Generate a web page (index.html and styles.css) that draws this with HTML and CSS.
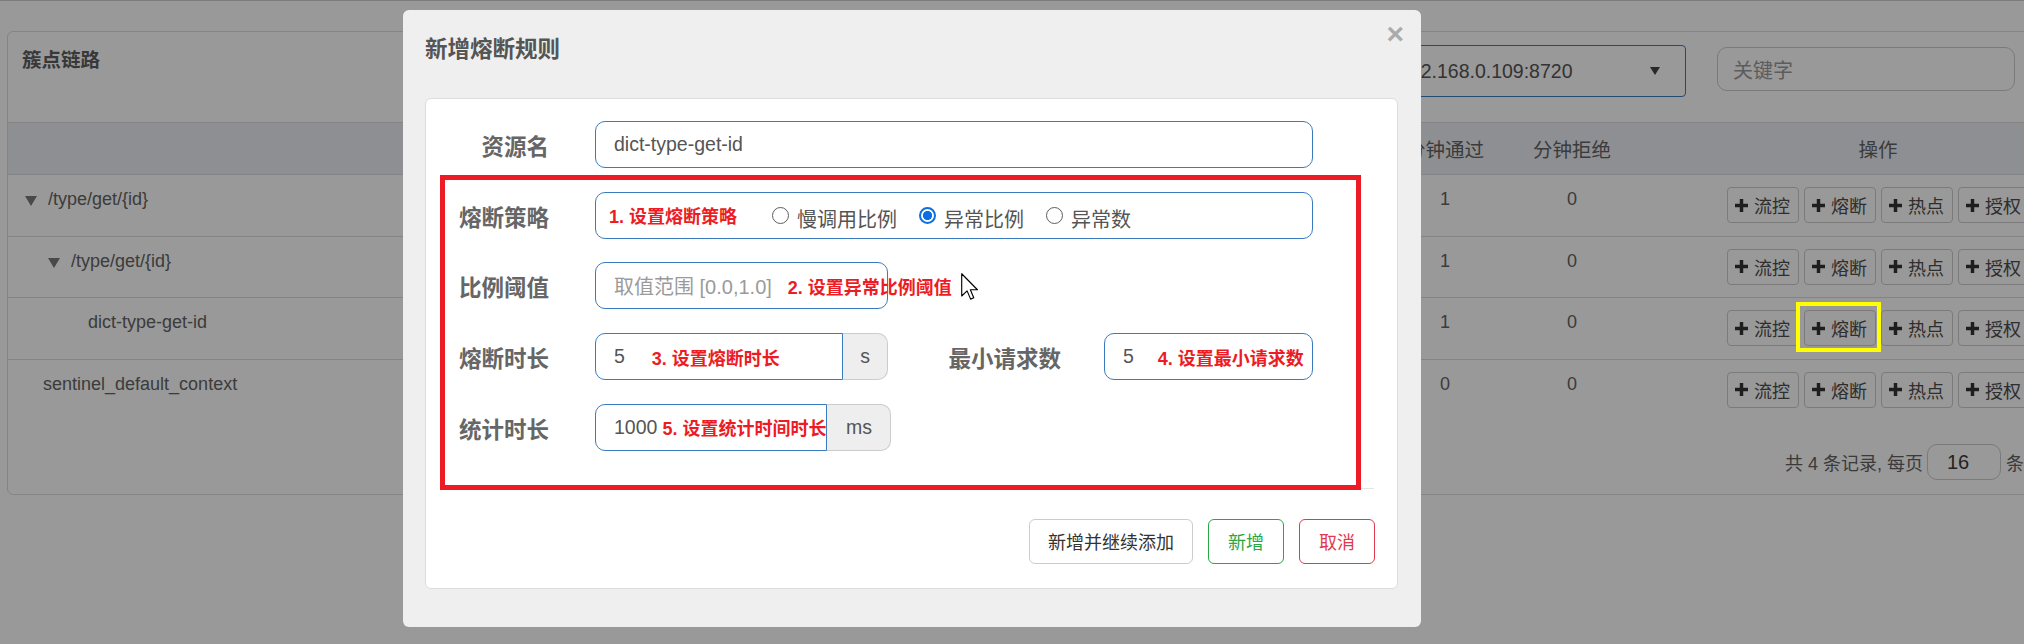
FILE: index.html
```html
<!DOCTYPE html>
<html lang="zh-CN">
<head>
<meta charset="utf-8">
<title>簇点链路</title>
<link rel="stylesheet" href="styles.css">
</head>
<body>
<div class="navline"></div>

<div class="card">
  <div class="card-head">
    <h3 class="card-title">簇点链路</h3>
    <div class="tools">
      <div class="select">192.168.0.109:8720<span class="caret"></span></div>
      <div class="search">关键字</div>
    </div>
  </div>

  <table class="table">
    <colgroup>
      <col class="w-name"><col class="w-num"><col class="w-num2"><col class="w-op">
    </colgroup>
    <thead>
      <tr><th class="th-name">资源名</th><th>分钟通过</th><th>分钟拒绝</th><th>操作</th></tr>
    </thead>
    <tbody>
      <tr>
        <td class="name lv0"><span class="tri"></span>/type/get/{id}</td>
        <td class="num">1</td><td class="num">0</td>
        <td class="ops"><div class="opbtns">
          <button class="obtn"><svg class="plus" viewBox="0 0 12 12"><path d="M4.4 0h3.2v4.4H12v3.2H7.6V12H4.4V7.6H0V4.4h4.4z"/></svg>流控</button>
          <button class="obtn"><svg class="plus" viewBox="0 0 12 12"><path d="M4.4 0h3.2v4.4H12v3.2H7.6V12H4.4V7.6H0V4.4h4.4z"/></svg>熔断</button>
          <button class="obtn"><svg class="plus" viewBox="0 0 12 12"><path d="M4.4 0h3.2v4.4H12v3.2H7.6V12H4.4V7.6H0V4.4h4.4z"/></svg>热点</button>
          <button class="obtn"><svg class="plus" viewBox="0 0 12 12"><path d="M4.4 0h3.2v4.4H12v3.2H7.6V12H4.4V7.6H0V4.4h4.4z"/></svg>授权</button>
        </div></td>
      </tr>
      <tr>
        <td class="name lv1"><span class="tri"></span>/type/get/{id}</td>
        <td class="num">1</td><td class="num">0</td>
        <td class="ops"><div class="opbtns">
          <button class="obtn"><svg class="plus" viewBox="0 0 12 12"><path d="M4.4 0h3.2v4.4H12v3.2H7.6V12H4.4V7.6H0V4.4h4.4z"/></svg>流控</button>
          <button class="obtn"><svg class="plus" viewBox="0 0 12 12"><path d="M4.4 0h3.2v4.4H12v3.2H7.6V12H4.4V7.6H0V4.4h4.4z"/></svg>熔断</button>
          <button class="obtn"><svg class="plus" viewBox="0 0 12 12"><path d="M4.4 0h3.2v4.4H12v3.2H7.6V12H4.4V7.6H0V4.4h4.4z"/></svg>热点</button>
          <button class="obtn"><svg class="plus" viewBox="0 0 12 12"><path d="M4.4 0h3.2v4.4H12v3.2H7.6V12H4.4V7.6H0V4.4h4.4z"/></svg>授权</button>
        </div></td>
      </tr>
      <tr>
        <td class="name leaf2">dict-type-get-id</td>
        <td class="num">1</td><td class="num">0</td>
        <td class="ops"><div class="opbtns">
          <button class="obtn"><svg class="plus" viewBox="0 0 12 12"><path d="M4.4 0h3.2v4.4H12v3.2H7.6V12H4.4V7.6H0V4.4h4.4z"/></svg>流控</button>
          <button class="obtn marked"><svg class="plus" viewBox="0 0 12 12"><path d="M4.4 0h3.2v4.4H12v3.2H7.6V12H4.4V7.6H0V4.4h4.4z"/></svg>熔断<span class="hl"></span></button>
          <button class="obtn"><svg class="plus" viewBox="0 0 12 12"><path d="M4.4 0h3.2v4.4H12v3.2H7.6V12H4.4V7.6H0V4.4h4.4z"/></svg>热点</button>
          <button class="obtn"><svg class="plus" viewBox="0 0 12 12"><path d="M4.4 0h3.2v4.4H12v3.2H7.6V12H4.4V7.6H0V4.4h4.4z"/></svg>授权</button>
        </div></td>
      </tr>
      <tr>
        <td class="name leaf0">sentinel_default_context</td>
        <td class="num">0</td><td class="num">0</td>
        <td class="ops"><div class="opbtns">
          <button class="obtn"><svg class="plus" viewBox="0 0 12 12"><path d="M4.4 0h3.2v4.4H12v3.2H7.6V12H4.4V7.6H0V4.4h4.4z"/></svg>流控</button>
          <button class="obtn"><svg class="plus" viewBox="0 0 12 12"><path d="M4.4 0h3.2v4.4H12v3.2H7.6V12H4.4V7.6H0V4.4h4.4z"/></svg>熔断</button>
          <button class="obtn"><svg class="plus" viewBox="0 0 12 12"><path d="M4.4 0h3.2v4.4H12v3.2H7.6V12H4.4V7.6H0V4.4h4.4z"/></svg>热点</button>
          <button class="obtn"><svg class="plus" viewBox="0 0 12 12"><path d="M4.4 0h3.2v4.4H12v3.2H7.6V12H4.4V7.6H0V4.4h4.4z"/></svg>授权</button>
        </div></td>
      </tr>
    </tbody>
  </table>

  <div class="pager">
    <span>共 4 条记录, 每页</span>
    <span class="pagesize">16</span>
    <span>条记录</span>
  </div>
</div>

<div class="backdrop"></div>

<div class="modal">
  <div class="modal-head">
    <h4 class="modal-title">新增熔断规则</h4>
    <span class="close">×</span>
  </div>
  <div class="panel">
    <div class="form">
      <div class="frow">
        <label class="flabel">资源名</label>
        <div class="inp full">dict-type-get-id</div>
      </div>
      <div class="frow">
        <label class="flabel">熔断策略</label>
        <div class="inp full">
          <span class="note n-first">1. 设置熔断策略</span>
          <label class="opt"><input type="radio" name="grade" class="rad"><span class="opt-text">慢调用比例</span></label>
          <label class="opt"><input type="radio" name="grade" class="rad" checked><span class="opt-text">异常比例</span></label>
          <label class="opt"><input type="radio" name="grade" class="rad"><span class="opt-text">异常数</span></label>
        </div>
      </div>
      <div class="frow">
        <label class="flabel">比例阈值</label>
        <div class="inp"><span class="ph">取值范围 [0.0,1.0]</span><span class="note n-ratio">2. 设置异常比例阈值</span></div>
      </div>
      <div class="frow">
        <label class="flabel">熔断时长</label>
        <div class="group">
          <div class="inp left">5<span class="note n-time">3. 设置熔断时长</span></div>
          <div class="addon addon-s">s</div>
        </div>
        <label class="flabel flabel2">最小请求数</label>
        <div class="inp">5<span class="note n-min">4. 设置最小请求数</span></div>
      </div>
      <div class="frow">
        <label class="flabel">统计时长</label>
        <div class="group">
          <div class="inp left">1000<span class="note n-stat">5. 设置统计时间时长</span></div>
          <div class="addon addon-ms">ms</div>
        </div>
      </div>
    </div>
    <div class="hr"></div>
    <div class="btns">
      <button class="btn">新增并继续添加</button>
      <button class="btn btn-ok">新增</button>
      <button class="btn btn-cancel">取消</button>
    </div>
    <div class="redbox"></div>
    <svg class="cursor" viewBox="0 0 12 19"><path d="M0.5 0.5V16.2L4.3 12.6L6.8 18.4L9 17.5L6.6 11.8H11.6Z" fill="#fff" stroke="#000" stroke-width="0.8" stroke-linejoin="round"/></svg>
  </div>
</div>
</body>
</html>
```

FILE: styles.css
```css
* { box-sizing: border-box; }

html, body { margin: 0; }

body {
  width: 2024px;
  height: 644px;
  overflow: hidden;
  background: #fff;
  font-family: "Liberation Sans", "Noto Sans CJK SC", sans-serif;
  font-size: 18px;
  color: #636363;
  position: relative;
}

.navline { height: 1px; background: #cfcfcf; }

/* ---------- background card ---------- */
.card {
  margin: 30px 0 0 7px;
  width: 2115px;
  border: 1px solid #dedede;
  border-radius: 6px;
  background: #fff;
}

.card-head {
  height: 90px;
  display: flex;
  align-items: flex-start;
  padding: 0 106px 0 14px;
}

.card-title {
  margin: 16px 0 0;
  font-size: 19.5px;
  line-height: 24px;
  font-weight: bold;
  color: #5e5e5e;
}

.tools {
  margin-left: auto;
  margin-top: 13px;
  display: flex;
  align-items: flex-start;
  gap: 31px;
}

.select {
  width: 302px;
  height: 52px;
  border: 1px solid #3b7cc0;
  border-radius: 4px;
  padding: 0 0 0 14px;
  display: flex;
  align-items: center;
  font-size: 19.5px;
  color: #555;
}

.caret {
  margin-left: auto;
  margin-right: 25px;
  width: 0;
  height: 0;
  border-left: 5.5px solid transparent;
  border-right: 5.5px solid transparent;
  border-top: 8px solid #444;
}

.search {
  margin-top: 2px;
  width: 298px;
  height: 44px;
  border: 1px solid #ccc;
  border-radius: 10px;
  padding-left: 15px;
  display: flex;
  align-items: center;
  font-size: 20px;
  color: #9a9a9a;
}

.table {
  width: 2113px;
  border-collapse: collapse;
  table-layout: fixed;
}

.w-name { width: 1373px; }
.w-num { width: 128px; }
.w-num2 { width: 126px; }
.w-op { width: 486px; }

.table th {
  height: 52px;
  padding: 0;
  border-top: 1px solid #dcdcdc;
  background: #edeff3;
  font-size: 19.5px;
  font-weight: normal;
  color: #636363;
  text-align: center;
}

.table th.th-name {
  text-align: right;
  padding-right: 40px;
}

.table td {
  border-top: 1px solid #dcdcdc;
  padding: 12px 8px 12.5px;
  vertical-align: top;
  line-height: 25px;
  color: #646464;
}

.table td.num { text-align: center; }

.table td.name { white-space: nowrap; }
.table td.lv0 { padding-left: 17px; }
.table td.lv1 { padding-left: 40px; }
.table td.leaf0 { padding-left: 35px; }
.table td.leaf2 { padding-left: 80px; }

.tri {
  display: inline-block;
  width: 0;
  height: 0;
  border-left: 6px solid transparent;
  border-right: 6px solid transparent;
  border-top: 10px solid #7a7a7a;
  margin-right: 11px;
  vertical-align: -1px;
}

.table td.ops { padding-left: 0; padding-right: 0; }

.opbtns {
  display: flex;
  justify-content: center;
  gap: 5px;
}

.obtn {
  position: relative;
  width: 72px;
  height: 36px;
  border: 1px solid #cdcdcd;
  border-radius: 4px;
  background: #fff;
  padding: 0;
  display: flex;
  align-items: center;
  justify-content: center;
  gap: 6px;
  font-family: inherit;
  font-size: 18px;
  color: #4d4d4d;
}

.plus { width: 13px; height: 13px; fill: #333; flex: none; }

.hl {
  position: absolute;
  left: -9px;
  top: -9px;
  right: -6px;
  bottom: -7px;
  border: 4px solid #ffff00;
  z-index: 15;
}

.pager {
  display: flex;
  justify-content: flex-end;
  align-items: center;
  padding: 24px 61px 14px 0;
  font-size: 18px;
  color: #636363;
}

.pagesize {
  width: 74px;
  height: 36px;
  margin: 0 5px 0 4px;
  border: 1px solid #ccc;
  border-radius: 10px;
  padding-left: 19px;
  display: flex;
  align-items: center;
  font-size: 20px;
  color: #3a3a3a;
}

/* ---------- modal ---------- */
.backdrop {
  position: fixed;
  inset: 0;
  background: rgba(0, 0, 0, 0.4);
  z-index: 10;
}

.modal {
  position: absolute;
  left: 403px;
  top: 10px;
  width: 1018px;
  height: 617px;
  background: #efefef;
  border-radius: 6px;
  z-index: 20;
  padding: 25px 23px 0 22px;
  color: #555;
}

.modal-head {
  height: 30px;
  margin-bottom: 33px;
  display: flex;
  justify-content: space-between;
  align-items: flex-start;
}

.modal-title {
  margin: 0;
  font-size: 22.5px;
  line-height: 30px;
  font-weight: bold;
  color: #555;
}

.close {
  font-family: "Liberation Sans", sans-serif;
  font-size: 30px;
  line-height: 30px;
  font-weight: bold;
  color: #ababab;
  margin: -16px -6px 0 0;
}

.panel {
  position: relative;
  height: 491px;
  background: #fff;
  border: 1px solid #ddd;
  border-radius: 6px;
}

.form {
  padding-top: 22px;
  display: flex;
  flex-direction: column;
  gap: 23.7px;
}

.frow {
  display: grid;
  grid-template-columns: 169px 293px 216px 209px;
  height: 47px;
  align-items: center;
}

.flabel {
  padding: 7px 46px 0 0;
  text-align: right;
  font-size: 22.5px;
  line-height: 30px;
  font-weight: bold;
  color: #666;
}

.flabel2 { padding-right: 43px; }

.inp {
  height: 47px;
  border: 1px solid #3a7bbf;
  border-radius: 10px;
  background: #fff;
  padding: 0 0 0 18px;
  display: flex;
  align-items: center;
  white-space: nowrap;
  font-size: 19.5px;
  color: #555;
}

.inp.full { grid-column: 2 / 5; }

.ph { color: #9a9a9a; font-size: 20px; }

.note {
  font-size: 18px;
  font-weight: bold;
  color: #ed1c24;
}

.n-first { margin-left: -5px; }
.n-ratio { margin-left: 16px; }
.n-time { margin-left: 27px; }
.n-min { margin-left: 24px; }
.n-stat { margin-left: 5px; }

.opt {
  display: inline-flex;
  align-items: center;
  gap: 8px;
  margin-left: 22px;
  font-size: 20px;
  color: #555;
}

.n-first + .opt { margin-left: 35px; }

.opt-text { padding-top: 9px; line-height: 24px; }

.rad {
  appearance: none;
  -webkit-appearance: none;
  margin: 0;
  width: 17px;
  height: 17px;
  border-radius: 50%;
  border: 1.5px solid #5d5d5d;
  background: #fff;
}

.rad:checked {
  border: 2px solid #0b6fe3;
  background: radial-gradient(circle, #0b6fe3 0 4.3px, #fff 4.8px);
}

.group { display: flex; height: 47px; }

.inp.left {
  flex: 1;
  border-radius: 10px 0 0 10px;
}

.addon {
  flex: none;
  height: 47px;
  display: flex;
  align-items: center;
  justify-content: center;
  background: #eee;
  border: 1px solid #ccc;
  border-left: none;
  border-radius: 0 10px 10px 0;
  font-size: 19.5px;
  color: #555;
}

.addon-s { width: 45px; }
.addon-ms { width: 64px; }

.hr {
  height: 1px;
  margin: 37px 23px 0 15px;
  background: #e5e5e5;
}

.btns {
  display: flex;
  justify-content: flex-end;
  gap: 15px;
  padding: 30px 22px 0 0;
}

.btn {
  height: 45px;
  padding: 0 18px;
  border: 1px solid #ccc;
  border-radius: 6px;
  background: #fff;
  font-family: inherit;
  font-size: 18px;
  color: #333;
}

.btn-ok { border-color: #2aa745; color: #2aa745; padding: 0 19px; }
.btn-cancel { border-color: #e03a4e; color: #e03a4e; padding: 0 19px; }

.redbox {
  position: absolute;
  left: 14px;
  top: 76px;
  width: 921px;
  height: 315px;
  border: 5px solid #ed1c24;
}

.cursor {
  position: absolute;
  left: 535px;
  top: 174px;
  width: 17px;
  height: 27px;
}
```
